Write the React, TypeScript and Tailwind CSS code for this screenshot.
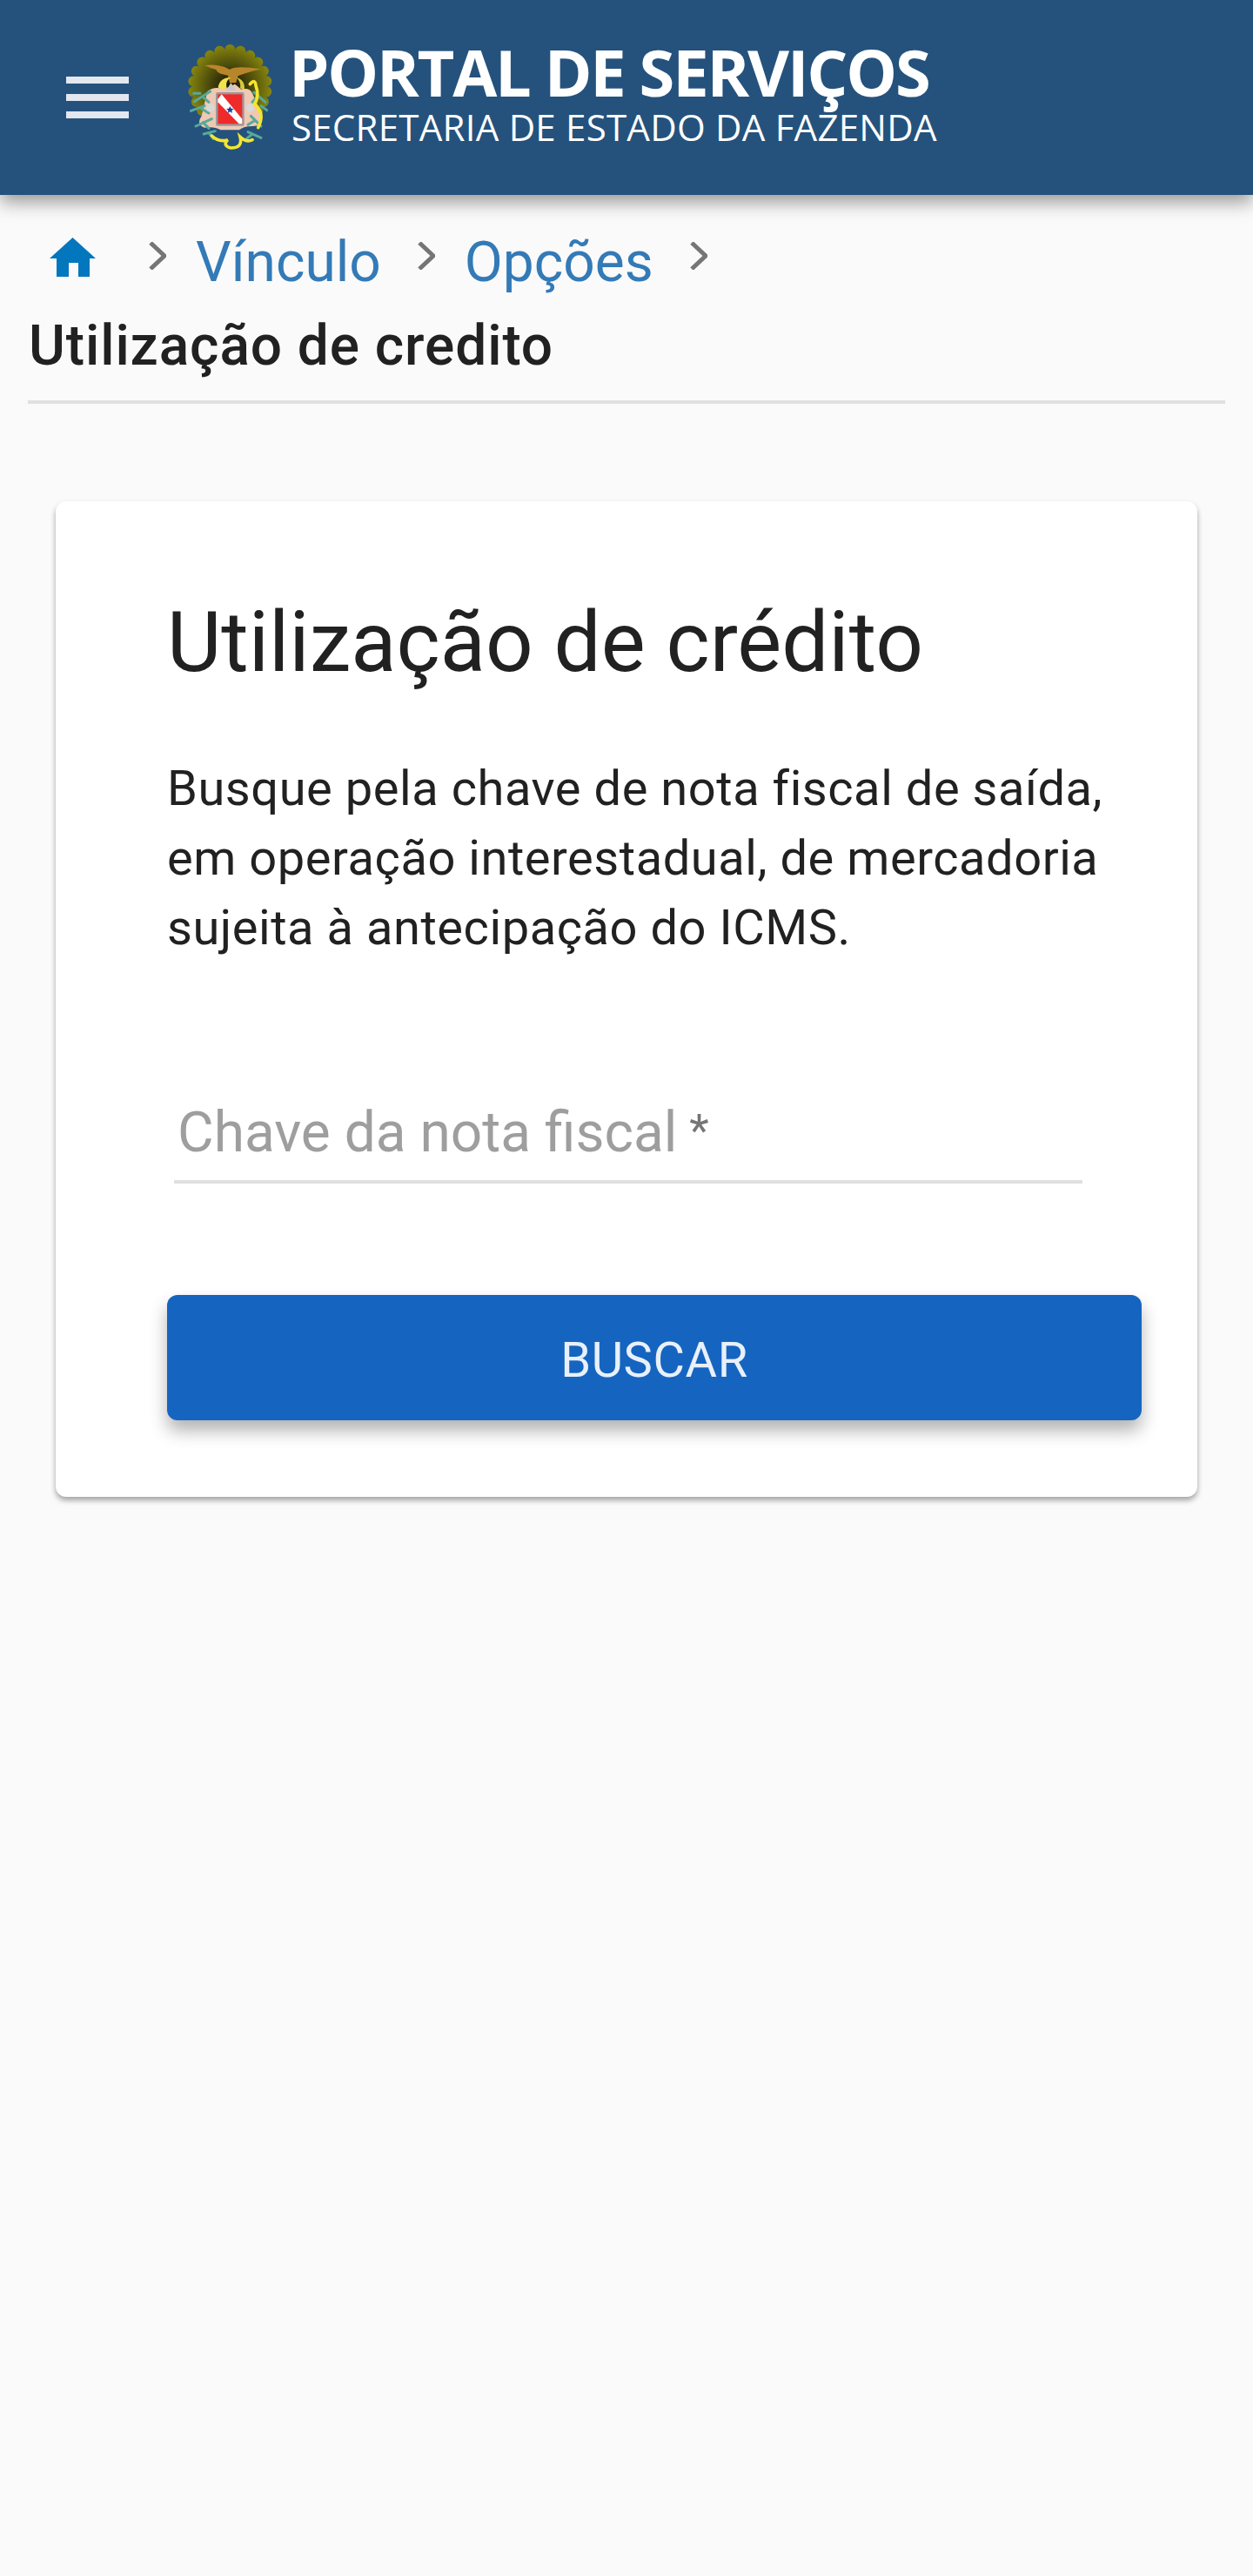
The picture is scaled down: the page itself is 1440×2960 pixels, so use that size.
import React from 'react';

// scalloped edge of the crest's sun
const scallopPath = (() => {
  const cx = 223, cy = 208, r = 128, n = 22;
  let d = '';
  for (let i = 0; i < n; i++) {
    const a = (i / n) * Math.PI * 2;
    const x = (cx + r * Math.cos(a)).toFixed(1);
    const y = (cy + r * Math.sin(a)).toFixed(1);
    d += i === 0 ? `M${x} ${y}` : `A18 18 0 0 1 ${x} ${y}`;
  }
  return d + `A18 18 0 0 1 ${cx + r} ${cy}Z`;
})();

function Crest() {
  return (
    <svg viewBox="0 0 450 450" className="w-[150px] h-[150px] shrink-0">
      <defs>
        <radialGradient id="sun" cx="50%" cy="50%" r="50%">
          <stop offset="0%" stopColor="#14130a" />
          <stop offset="40%" stopColor="#3f3d0a" />
          <stop offset="100%" stopColor="#87860f" />
        </radialGradient>
      </defs>
      <path d={scallopPath} fill="url(#sun)" />
      {/* eagle */}
      <path d="M135 135 Q185 128 222 150 Q240 135 330 148 Q280 160 250 172 L244 195 L222 196 L216 170 Q180 165 175 150 Q155 145 135 135Z" fill="#b8862a" />
      {/* hair */}
      <path d="M182 212 Q186 178 226 176 Q205 190 212 212 L200 222Z" fill="#f0e24a" />
      <path d="M244 176 Q278 186 272 222 L258 214 Q262 190 244 176Z" fill="#d8c93a" />
      {/* pink mantle */}
      <path d="M145 225 Q170 205 200 218 L240 200 L262 218 Q290 210 300 232 L330 300 Q345 345 300 345 Q270 345 255 358 L190 358 Q170 345 135 350 Q105 340 125 310Z" fill="#efc9b4" />
      {/* teal leaves */}
      <g stroke="#56a99c" strokeWidth="9" strokeLinecap="round" fill="none">
        <path d="M155 225 L100 260 M130 245 L150 262 M120 232 L98 232 M135 275 L88 292 M125 285 L150 300" />
        <path d="M160 320 L105 345 M130 332 L150 352 M172 362 L132 372 M150 368 L165 388" />
        <path d="M305 228 L345 262 M320 240 L300 262 M330 275 L350 290 M295 310 L330 345 M310 325 L285 340 M285 365 L330 385 M300 372 L280 388" />
      </g>
      {/* grey ornaments */}
      <circle cx="155" cy="282" r="14" fill="#d8d8d8" />
      <circle cx="292" cy="282" r="14" fill="#d8d8d8" />
      <path d="M210 222 L226 196 L244 222Z" fill="#c9c9c9" />
      {/* ribbon */}
      <path d="M292 200 Q310 180 312 205 Q325 240 308 270 Q345 300 320 350" stroke="#f4e52e" strokeWidth="11" fill="none" strokeLinecap="round" />
      <path d="M160 378 Q185 402 215 392 Q196 412 226 420 Q268 420 258 382 Q280 402 300 392" stroke="#f4e52e" strokeWidth="11" fill="none" strokeLinecap="round" />
      {/* shield */}
      <rect x="174" y="228" width="98" height="116" rx="6" fill="#9a9a9a" />
      <rect x="181" y="235" width="84" height="102" fill="#ee2a2a" />
      <path d="M181 252 L194 235 L265 320 L265 337 L254 337 L181 262Z" fill="#fff" />
      <path d="M223 276 l4 8 9 1 -7 6 2 9 -8 -5 -8 5 2 -9 -7 -6 9 -1Z" fill="#1d3f9a" />
    </svg>
  );
}

function Chevron({ className }: { className: string }) {
  return (
    <svg viewBox="0 0 20 32" className={`w-5 h-8 shrink-0 ${className}`}>
      <path d="M2 1 L18 16 L2 31" stroke="#757575" strokeWidth="5" fill="none" />
    </svg>
  );
}

export default function App() {
  return (
    <div className="min-h-[2960px] bg-[#fafafa] font-['Roboto',sans-serif] text-[#212121]">
      <header className="h-[224px] bg-[#24527d] flex items-center pl-[76px] shadow-[0_8px_20px_rgba(0,0,0,0.4)] relative">
        <div className="w-[72px] flex flex-col gap-3 shrink-0">
          <div className="h-2 bg-[#e3e7ef]" />
          <div className="h-2 bg-[#e3e7ef]" />
          <div className="h-2 bg-[#e3e7ef]" />
        </div>
        <div className="ml-[42px] -mt-[14px]">
          <Crest />
        </div>
        <div className="-ml-[8px] -mt-[11px] font-['Open_Sans',sans-serif] text-white">
          <div className="text-[74px] leading-[79px] font-bold tracking-[-2.2px] whitespace-nowrap">PORTAL DE SERVIÇOS</div>
          <div className="text-[42px] leading-[48px] ml-[3px] tracking-[0.25px] whitespace-nowrap">SECRETARIA DE ESTADO DA FAZENDA</div>
        </div>
      </header>

      <nav className="flex items-center pl-[57px] h-[88px] mt-[34px] text-[64px] leading-[88px] text-[#337ab7]">
        <svg viewBox="0 0 53 45" className="w-[53px] h-[45px] shrink-0 -mt-[14px]">
          <path d="M26.5 0 L53 24 L46 24 L46 45 L33 45 L33 29 L22 29 L22 45 L8 45 L8 24 L0 24Z" fill="#0277bd" />
        </svg>
        <Chevron className="ml-[61px] -mt-[16px]" />
        <span className="ml-[34px]">Vínculo</span>
        <Chevron className="ml-[42px] -mt-[16px]" />
        <span className="ml-[34px]">Opções</span>
        <Chevron className="ml-[42px] -mt-[16px]" />
      </nav>

      <h2 className="mx-8 mt-[12px] pb-[22px] border-b-4 border-[#e0e0e0] text-[64px] leading-[80px] font-medium tracking-[0.9px] pl-[1px]">Utilização de credito</h2>

      <main className="mx-16 mt-[112px] h-[1144px] bg-white rounded-xl shadow-[0_4px_6px_rgba(0,0,0,0.35)] pl-[128px] pr-[64px] pt-[106px]">
        <h1 className="text-[96px] leading-[112px] font-normal">Utilização de crédito</h1>
        <p className="mt-[72px] text-[56px] leading-[80px] tracking-[0.55px]">
          Busque pela chave de nota fiscal de saída,<br />
          em operação interestadual, de mercadoria<br />
          sujeita à antecipação do ICMS.
        </p>
        <div className="mt-[154px] ml-2 mr-[68px] h-[100px] border-b-4 border-[#e0e0e0] pl-[4px] text-[64px] leading-[80px] text-[#9e9e9e] whitespace-nowrap">
          Chave da nota fiscal<span className="text-[52px] text-[#757575] ml-[14px] align-[6px]">*</span>
        </div>
        <button className="mt-[128px] block w-[1120px] h-[144px] pt-[5px] bg-[#1565c0] rounded-xl text-[56px] tracking-[0.6px] text-[#e8f0fa] uppercase shadow-[0_12px_20px_rgba(0,0,0,0.3)]">
          Buscar
        </button>
      </main>
    </div>
  );
}
